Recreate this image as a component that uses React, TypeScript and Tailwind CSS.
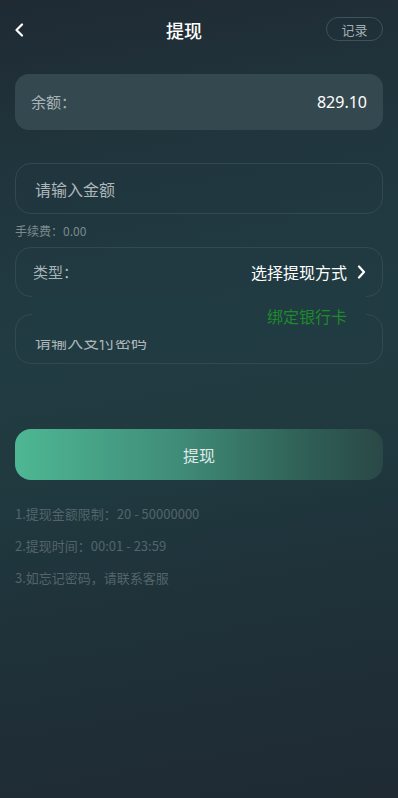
import React from "react";

export default function App() {
  return (
    <div
      className="relative w-[398px] h-[798px] overflow-hidden"
      style={{
        fontFamily: '"Noto Sans CJK SC", "Noto Sans", sans-serif',
        background:
          "linear-gradient(170deg, #1f2a33 0%, #20343c 18%, #213b42 40%, #203a40 55%, #1f323a 72%, #1f2a33 100%)",
      }}
    >
      {/* header */}
      <div className="relative h-[60px] flex items-center justify-center pr-[30px]">
        <svg
          className="absolute left-[14px] top-[23px]"
          width="10"
          height="14"
          viewBox="0 0 10 14"
          fill="none"
        >
          <path d="M8 1.5 L2.5 7 L8 12.5" stroke="#ffffff" strokeWidth="2.2" strokeLinecap="round" strokeLinejoin="round" />
        </svg>
        <div className="text-[18px] font-medium text-white leading-none">提现</div>
        <div className="absolute right-[15px] top-[17px] w-[57px] h-[24px] rounded-full border border-[#3f5259] flex items-center justify-center text-[13px] text-[#a3adb0] leading-none">
          记录
        </div>
      </div>

      <div className="px-[15px]">
        {/* balance */}
        <div className="mt-[14px] h-[56px] rounded-[14px] bg-[#34484f] flex items-center justify-between pl-[16px] pr-[16px]">
          <span className="text-[15px] text-[#a8b3b6]">余额：</span>
          <span className="text-[16px] text-white" style={{ fontFamily: '"Noto Sans", sans-serif' }}>829.10</span>
        </div>

        {/* amount */}
        <div className="mt-[33px] h-[51px] rounded-[16px] border border-[#34494f] flex items-center pl-[19px]">
          <span className="text-[16px] text-[#aeb7b9]">请输入金额</span>
        </div>
        <div className="mt-[9px] text-[12px] text-[#7b8a8d] leading-[16px]">手续费：0.00</div>

        {/* type */}
        <div className="mt-[8px] h-[50px] rounded-[16px] border border-[#34494f] flex items-center justify-between pl-[17px] pr-[16px]">
          <span className="text-[15px] text-[#a8b3b6]">类型：</span>
          <span className="flex items-center gap-[10px]">
            <span className="text-[16px] text-white">选择提现方式</span>
            <svg width="9" height="14" viewBox="0 0 9 14" fill="none">
              <path d="M2 1.5 L7 7 L2 12.5" stroke="#ffffff" strokeWidth="2.2" strokeLinecap="round" strokeLinejoin="round" />
            </svg>
          </span>
        </div>

        {/* password */}
        <div className="mt-[17px] h-[50px] rounded-[16px] border border-[#34494f] flex items-center pl-[19px]">
          <span className="text-[16px] text-[#aeb7b9] pt-[4px]">请输入支付密码</span>
        </div>

        {/* button */}
        <div
          className="mt-[65px] h-[51px] rounded-[16px] flex items-center justify-center"
          style={{ background: "linear-gradient(90deg, #4eb793 0%, #3f8c78 45%, #2f5e55 80%, #2a4847 100%)" }}
        >
          <span className="text-[16px] text-[#dfe8e6]">提现</span>
        </div>

        {/* notes */}
        <div className="mt-[24px] flex flex-col gap-[12px] text-[13px] text-[#52656a] leading-[20px]">
          <div>1.提现金额限制：20 - 50000000</div>
          <div>2.提现时间：00:01 - 23:59</div>
          <div>3.如忘记密码，请联系客服</div>
        </div>
      </div>

      {/* dropdown overlay */}
      <div className="absolute left-[32px] top-[296px] w-[334px] h-[44px] bg-[#213b42] flex items-start justify-end pr-[19px] pt-[9px]">
        <span className="text-[16px] leading-[22px] text-[#1d8a2c]">绑定银行卡</span>
      </div>
    </div>
  );
}
